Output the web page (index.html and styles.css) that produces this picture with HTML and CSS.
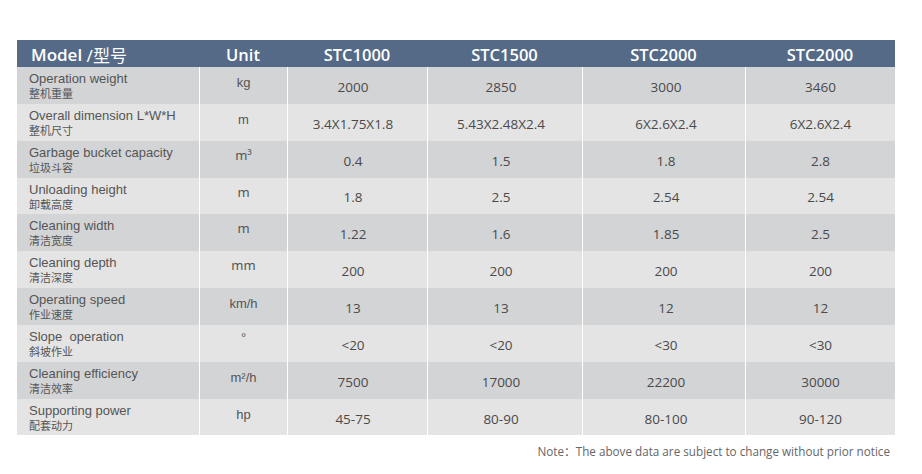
FILE: index.html
```html
<!DOCTYPE html>
<html lang="zh">
<head>
<meta charset="utf-8">
<title>Specifications</title>
<link rel="stylesheet" href="styles.css">
</head>
<body>
<div class="page">
  <div class="spec">
    <div class="hd first">Model <span class="thin">/型号</span></div>
    <div class="hd">Unit</div>
    <div class="hd">STC1000</div>
    <div class="hd">STC1500</div>
    <div class="hd">STC2000</div>
    <div class="hd">STC2000</div>

    <div class="lbl dark"><span class="en">Operation weight</span><span class="cn">整机重量</span></div>
    <div class="unit dark">kg</div>
    <div class="val c1 dark">2000</div><div class="val c2 dark">2850</div><div class="val c3 dark">3000</div><div class="val dark">3460</div>

    <div class="lbl light"><span class="en">Overall dimension L*W*H</span><span class="cn">整机尺寸</span></div>
    <div class="unit light">m</div>
    <div class="val c1 light">3.4X1.75X1.8</div><div class="val c2 light">5.43X2.48X2.4</div><div class="val c3 light">6X2.6X2.4</div><div class="val light">6X2.6X2.4</div>

    <div class="lbl dark"><span class="en">Garbage bucket capacity</span><span class="cn">垃圾斗容</span></div>
    <div class="unit dark sym">m³</div>
    <div class="val c1 dark">0.4</div><div class="val c2 dark">1.5</div><div class="val c3 dark">1.8</div><div class="val dark">2.8</div>

    <div class="lbl light"><span class="en">Unloading height</span><span class="cn">卸载高度</span></div>
    <div class="unit light sym">m</div>
    <div class="val c1 light">1.8</div><div class="val c2 light">2.5</div><div class="val c3 light">2.54</div><div class="val light">2.54</div>

    <div class="lbl dark"><span class="en">Cleaning width</span><span class="cn">清洁宽度</span></div>
    <div class="unit dark sym">m</div>
    <div class="val c1 dark">1.22</div><div class="val c2 dark">1.6</div><div class="val c3 dark">1.85</div><div class="val dark">2.5</div>

    <div class="lbl light"><span class="en">Cleaning depth</span><span class="cn">清洁深度</span></div>
    <div class="unit light sym">mm</div>
    <div class="val c1 light">200</div><div class="val c2 light">200</div><div class="val c3 light">200</div><div class="val light">200</div>

    <div class="lbl dark"><span class="en">Operating speed</span><span class="cn">作业速度</span></div>
    <div class="unit dark">km/h</div>
    <div class="val c1 dark">13</div><div class="val c2 dark">13</div><div class="val c3 dark">12</div><div class="val dark">12</div>

    <div class="lbl light"><span class="en">Slope&nbsp; operation</span><span class="cn">斜坡作业</span></div>
    <div class="unit light deg">°</div>
    <div class="val c1 light">&lt;20</div><div class="val c2 light">&lt;20</div><div class="val c3 light">&lt;30</div><div class="val light">&lt;30</div>

    <div class="lbl dark"><span class="en">Cleaning efficiency</span><span class="cn">清洁效率</span></div>
    <div class="unit dark">m²/h</div>
    <div class="val c1 dark">7500</div><div class="val c2 dark">17000</div><div class="val c3 dark">22200</div><div class="val dark">30000</div>

    <div class="lbl light"><span class="en">Supporting power</span><span class="cn">配套动力</span></div>
    <div class="unit light">hp</div>
    <div class="val c1 light">45-75</div><div class="val c2 light">80-90</div><div class="val c3 light">80-100</div><div class="val light">90-120</div>
  </div>
  <p class="note">Note：The above data are subject to change without prior notice</p>
</div>
</body>
</html>
```

FILE: styles.css
```css
html, body {
  margin: 0;
  padding: 0;
  background: #ffffff;
}

.page {
  padding: 40px 0 0 17px;
  width: 878px;
}

.spec {
  display: grid;
  grid-template-columns: 182px 88px 140px 155px 163px 150px;
  grid-template-rows: 27px repeat(10, 36.85px);
}

.hd {
  background: #546a87;
  color: #ffffff;
  font-family: "Open Sans", "Noto Sans", "Noto Sans CJK SC", sans-serif;
  font-weight: 600;
  font-size: 16.5px;
  display: flex;
  align-items: center;
  justify-content: center;
  padding-top: 1px;
}

.hd.first {
  justify-content: flex-start;
  padding-left: 14px;
  font-size: 17px;
  white-space: pre;
}

.hd .thin {
  font-weight: 400;
  font-family: "Noto Sans", "Noto Sans CJK SC", sans-serif;
}

.dark { background: #d3d4d6; }
.light { background: #e4e4e4; }

.lbl {
  display: flex;
  flex-direction: column;
  padding: 4px 0 0 12px;
  color: #555555;
}

.lbl .en {
  font-family: "Liberation Sans", Arial, sans-serif;
  font-size: 13px;
  line-height: 15px;
  white-space: nowrap;
}

.lbl .cn {
  font-family: "Noto Sans CJK SC", sans-serif;
  font-size: 11px;
  line-height: 15px;
}

.unit, .val {
  border-left: 1px solid #ffffff;
  text-align: center;
}

.unit {
  font-family: "Liberation Sans", Arial, sans-serif;
  font-size: 13px;
  line-height: 15px;
  color: #555555;
  padding-top: 8px;
}

.unit.sym {
  font-family: "Noto Sans", sans-serif;
  padding-top: 7px;
}

.unit.deg {
  font-size: 13px;
  padding-top: 5px;
}

.val {
  font-family: "Open Sans", "Noto Sans", sans-serif;
  font-size: 13.5px;
  color: #4a4a4a;
  display: flex;
  align-items: center;
  justify-content: center;
  padding-top: 3px;
}

.val.c1 { padding-right: 9px; }
.val.c2 { padding-right: 8px; }
.val.c3 { padding-left: 4px; }

.note {
  margin: 7px 0 0;
  text-align: right;
  padding-right: 5px;
  font-family: "Open Sans", "Noto Sans", "Noto Sans CJK SC", sans-serif;
  font-size: 11.7px;
  color: #666666;
}
```
